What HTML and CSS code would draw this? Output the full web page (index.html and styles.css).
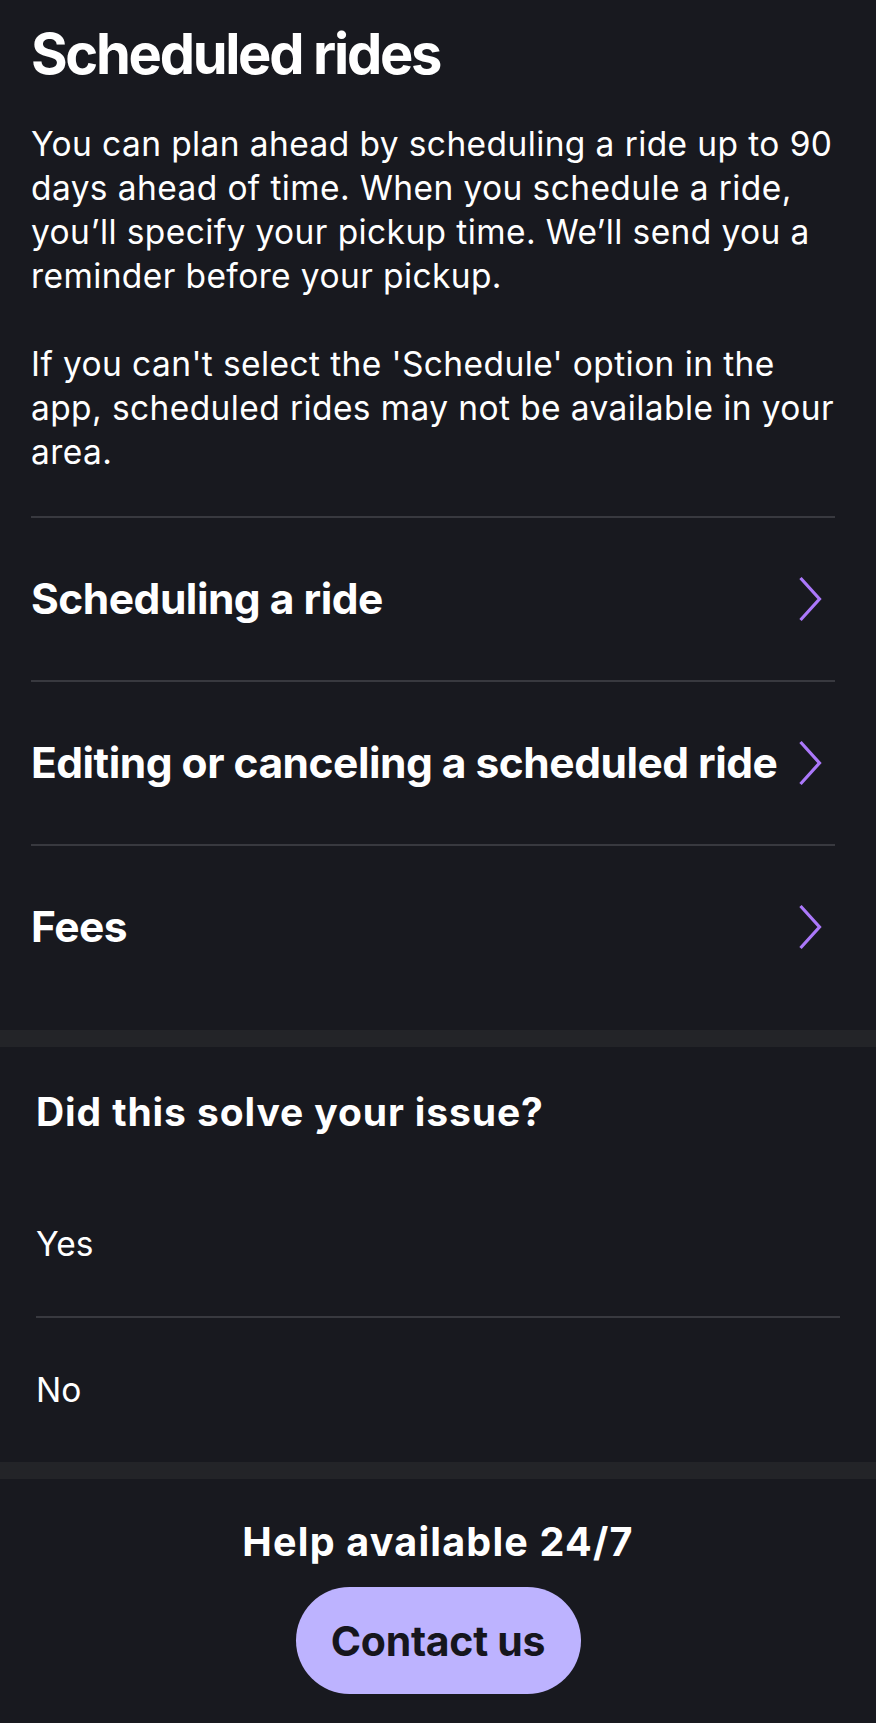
FILE: index.html
```html
<!DOCTYPE html>
<html lang="en">
<head>
<meta charset="utf-8">
<title>Scheduled rides</title>
<link rel="stylesheet" href="styles.css">
</head>
<body>
<main class="article">
  <h1 class="title">Scheduled rides</h1>
  <p class="para">You can plan ahead by scheduling a ride up to 90 days ahead of time. When you schedule a ride, you’ll specify your pickup time. We’ll send you a reminder before your pickup.</p>
  <p class="para">If you can't select the 'Schedule' option in the app, scheduled rides may not be available in your area.</p>
  <ul class="links">
    <li class="link-row"><span class="link-text">Scheduling a ride</span><svg class="chev" width="24" height="46" viewBox="0 0 24 46"><path d="M2.5 2 L21.5 23 L2.5 44" fill="none" stroke="#ab78fa" stroke-width="3.2"/></svg></li>
    <li class="link-row"><span class="link-text">Editing or canceling a scheduled ride</span><svg class="chev" width="24" height="46" viewBox="0 0 24 46"><path d="M2.5 2 L21.5 23 L2.5 44" fill="none" stroke="#ab78fa" stroke-width="3.2"/></svg></li>
    <li class="link-row"><span class="link-text">Fees</span><svg class="chev" width="24" height="46" viewBox="0 0 24 46"><path d="M2.5 2 L21.5 23 L2.5 44" fill="none" stroke="#ab78fa" stroke-width="3.2"/></svg></li>
  </ul>
</main>
<div class="band"></div>
<section class="feedback">
  <h2 class="question">Did this solve your issue?</h2>
  <div class="options">
    <div class="option">Yes</div>
    <div class="option">No</div>
  </div>
</section>
<div class="band"></div>
<footer class="help">
  <h2 class="help-title">Help available 24/7</h2>
  <button class="contact">Contact us</button>
</footer>
</body>
</html>
```
FILE: styles.css
```css
html, body {
  margin: 0;
  padding: 0;
  background: #18191f;
  color: #ffffff;
}
body {
  font-family: Inter, sans-serif;
}
.article {
  padding: 21px 41px 22px 31px;
}
.title {
  margin: 0;
  font-weight: 700;
  font-size: 56px;
  letter-spacing: -2.3px;
  line-height: 66px;
}
.para {
  margin: 35px 0 0 0;
  font-size: 33.5px;
  letter-spacing: 0.4px;
  line-height: 44px;
}
.para + .para {
  margin-top: 44px;
}
.links {
  list-style: none;
  margin: 42px 0 0 0;
  padding: 0;
}
.link-row {
  display: flex;
  align-items: center;
  justify-content: space-between;
  height: 162px;
  border-top: 2px solid #38393f;
}
.link-text {
  font-weight: 700;
  font-size: 42.5px;
  letter-spacing: -0.5px;
  line-height: 50px;
}
.chev {
  margin-right: 13px;
  flex: none;
}
.band {
  height: 17px;
  background: #232428;
}
.feedback {
  padding: 41px 36px 0 36px;
}
.question {
  margin: 0;
  font-weight: 700;
  font-size: 39px;
  letter-spacing: 0.9px;
  line-height: 48px;
}
.options {
  margin-top: 36px;
}
.option {
  height: 144px;
  display: flex;
  align-items: center;
  font-size: 33.5px;
}
.option + .option {
  border-top: 2px solid #38393f;
}
.help {
  padding: 39px 0 29px 0;
  display: flex;
  flex-direction: column;
  align-items: center;
}
.help-title {
  margin: 0;
  font-weight: 700;
  font-size: 39.5px;
  letter-spacing: 1.2px;
  line-height: 48px;
}
.contact {
  margin-top: 21px;
  width: 285px;
  height: 107px;
  border: none;
  border-radius: 54px;
  background: #bdb3ff;
  color: #16161d;
  font-family: Inter, sans-serif;
  font-weight: 700;
  font-size: 41px;
  letter-spacing: -0.3px;
  padding: 0;
}
```
